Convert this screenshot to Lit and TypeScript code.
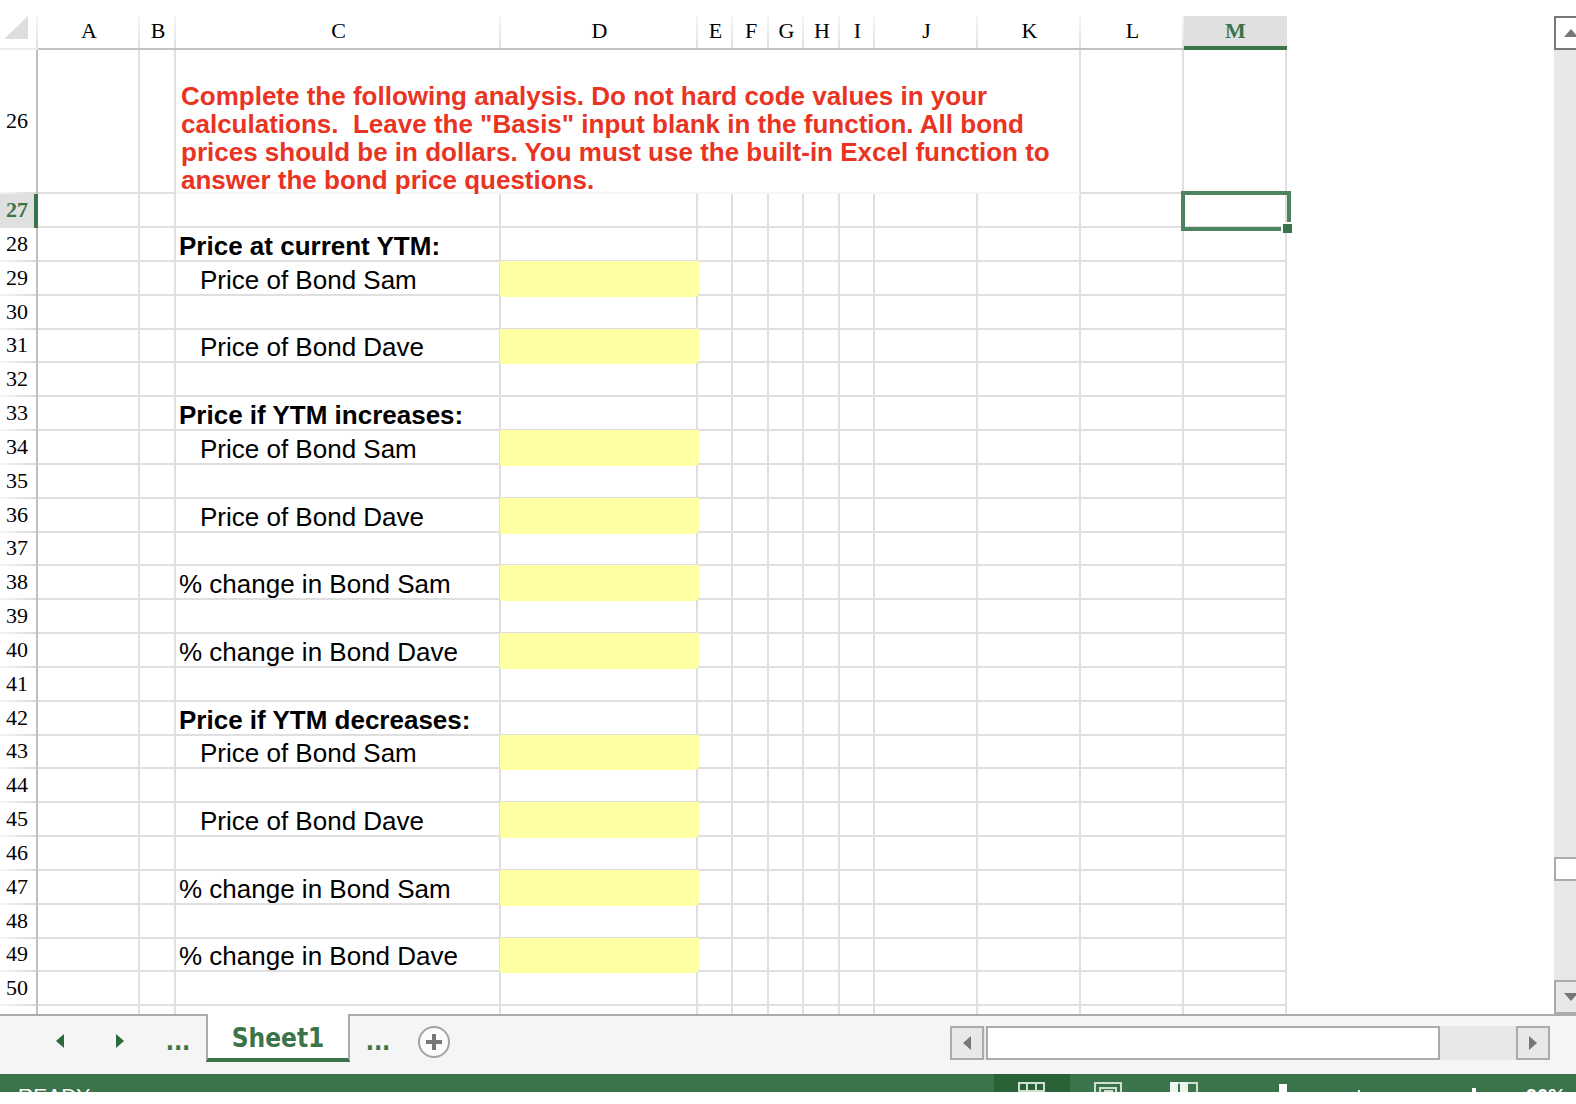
import { LitElement, html, css, nothing } from "lit";
import { customElement } from "lit/decorators.js";
import { classMap } from "lit/directives/class-map.js";

const COLUMNS = ["A", "B", "C", "D", "E", "F", "G", "H", "I", "J", "K", "L", "M"];
const ACTIVE_COLUMN = "M";
const ACTIVE_ROW = 27;

type Label = { text: string; kind: "title" | "item" | "change" };

const LABELS: Record<number, Label> = {
  28: { text: "Price at current YTM:", kind: "title" },
  29: { text: "Price of Bond Sam", kind: "item" },
  31: { text: "Price of Bond Dave", kind: "item" },
  33: { text: "Price if YTM increases:", kind: "title" },
  34: { text: "Price of Bond Sam", kind: "item" },
  36: { text: "Price of Bond Dave", kind: "item" },
  38: { text: "% change in Bond Sam", kind: "change" },
  40: { text: "% change in Bond Dave", kind: "change" },
  42: { text: "Price if YTM decreases:", kind: "title" },
  43: { text: "Price of Bond Sam", kind: "item" },
  45: { text: "Price of Bond Dave", kind: "item" },
  47: { text: "% change in Bond Sam", kind: "change" },
  49: { text: "% change in Bond Dave", kind: "change" },
};

const ROWS = Array.from({ length: 24 }, (_, i) => 27 + i);

@customElement("sheet-grid")
export class SheetGrid extends LitElement {
  static styles = css`
    :host { display: block; overflow: hidden; min-width: 0; }
    table {
      width: 0;
      table-layout: fixed;
      border-collapse: separate;
      border-spacing: 0;
      font-family: "Liberation Sans", Arial, sans-serif;
      font-size: 26px;
      line-height: 28px;
      color: #000;
    }
    .w-head { width: 38px; }
    .w-a { width: 102px; }
    .w-b { width: 36px; }
    .w-c { width: 325px; }
    .w-d { width: 197px; }
    .w-e, .w-g, .w-i { width: 35px; }
    .w-f, .w-h { width: 36px; }
    .w-j, .w-k, .w-l, .w-m { width: 103px; }
    th, td { box-sizing: border-box; padding: 0; }
    th {
      font-family: "Liberation Serif", "Times New Roman", serif;
      font-size: 22px;
      line-height: 24px;
      font-weight: 400;
    }
    thead th {
      height: 34px;
      padding-bottom: 2px;
      border-bottom: 2px solid #c2c2c2;
      background: linear-gradient(#f6f6f6, #dfdfdf) right / 2px 100% no-repeat;
    }
    thead .corner {
      border-bottom-color: #ececec;
      padding: 0 8px 8px 4px;
      vertical-align: top;
    }
    .corner svg { display: block; }
    thead .active {
      background: #e0e0e0;
      border-bottom: 4px solid #3b744b;
      padding-bottom: 0;
      color: #3b744b;
      font-weight: 700;
    }
    tbody th {
      border-right: 2px solid #c0c0c0;
      padding: 0 2px 3px 0;
      background: linear-gradient(90deg, #f6f6f6, #dadada) bottom / 100% 2px no-repeat;
    }
    tbody .active {
      background: #e0e0e0;
      border-right: 4px solid #3b744b;
      padding-right: 0;
      color: #3b744b;
      font-weight: 700;
    }
    td {
      position: relative;
      border-right: 2px solid #dfdfdf;
      border-bottom: 2px solid #dfdfdf;
      white-space: nowrap;
    }
    tr { height: 34px; }
    tbody tr:nth-child(6n) { height: 33px; }
    tbody .tall { height: 144px; }
    .note {
      padding: 28px 0 0 5px;
      border-bottom-color: #f5f5f5;
      vertical-align: bottom;
      font-weight: 700;
      color: #e93323;
    }
    .note p { margin: 0 0 -2px; white-space: pre-wrap; }
    .title, .change { padding-left: 3px; vertical-align: bottom; }
    .title { font-weight: 700; }
    .item { padding-left: 24px; vertical-align: bottom; }
    .entry {
      background: #ffffa3;
      border-color: #ffffa3;
      box-shadow: 0 0 0 1px #ffffa3;
    }
    .entry input {
      display: block;
      box-sizing: border-box;
      width: 100%;
      height: 28px;
      margin: 0;
      padding: 0 4px;
      border: 0;
      outline: 0;
      background: transparent;
      font: inherit;
      text-align: right;
    }
    .cursor {
      position: absolute;
      z-index: 1;
      inset: -3px -6px -5px -3px;
      border: 4px solid #4d8460;
    }
    .handle {
      position: absolute;
      right: -5px;
      bottom: -6px;
      width: 9px;
      height: 9px;
      border: 2px solid #fff;
      border-right: 0;
      border-bottom: 0;
      background: #3b744b;
    }
  `;

  private cell(row: number, col: string) {
    const label = LABELS[row];
    if (col === "C" && label) return html`<td class=${label.kind}>${label.text}</td>`;
    if (col === "D" && label && label.kind !== "title") {
      return html`<td class="entry"><input type="text" aria-label="${label.text}, D${row}"></td>`;
    }
    const active = row === ACTIVE_ROW && col === ACTIVE_COLUMN;
    return html`<td>${active ? html`<div class="cursor"><span class="handle"></span></div>` : nothing}</td>`;
  }

  render() {
    return html`
      <table>
        <colgroup>
          <col class="w-head">
          ${COLUMNS.map((c) => html`<col class="w-${c.toLowerCase()}">`)}
        </colgroup>
        <thead>
          <tr>
            <th class="corner">
              <svg width="24" height="24" viewBox="0 0 24 24" aria-hidden="true">
                <path d="M24 0V23H0Z" fill="#dedede" />
              </svg>
            </th>
            ${COLUMNS.map((c) => html`<th scope="col" class=${classMap({ active: c === ACTIVE_COLUMN })}>${c}</th>`)}
          </tr>
        </thead>
        <tbody>
          <tr class="tall">
            <th scope="row">26</th>
            <td></td>
            <td></td>
            <td class="note" colspan="9"><p>Complete the following analysis. Do not hard code values in your calculations.  Leave the "Basis" input blank in the function. All bond prices should be in dollars. You must use the built-in Excel function to answer the bond price questions.</p></td>
            <td></td>
            <td></td>
          </tr>
          ${ROWS.map((r) => html`
            <tr>
              <th scope="row" class=${classMap({ active: r === ACTIVE_ROW })}>${r}</th>
              ${COLUMNS.map((c) => this.cell(r, c))}
            </tr>`)}
          <tr>
            <th></th>
            ${COLUMNS.map(() => html`<td></td>`)}
          </tr>
        </tbody>
      </table>
    `;
  }
}

@customElement("sheet-tabs")
export class SheetTabs extends LitElement {
  static styles = css`
    :host {
      display: flex;
      box-sizing: border-box;
      height: 60px;
      background: #f5f5f5;
      font-family: "DejaVu Sans Condensed", "DejaVu Sans", Tahoma, sans-serif;
      color: #3b744b;
    }
    button {
      display: flex;
      align-items: center;
      justify-content: center;
      box-sizing: border-box;
      margin: 0;
      padding: 0;
      border: 0;
      background: none;
      color: inherit;
      font: inherit;
    }
    .rule { box-sizing: border-box; height: 60px; border-top: 2px solid #ababab; }
    .nav { display: flex; width: 206px; padding-left: 30px; }
    .nav button { width: 60px; height: 50px; }
    .nav .more, .after .more {
      width: 56px;
      height: 40px;
      align-items: flex-end;
      font-size: 24px;
      line-height: 28px;
      font-weight: 700;
    }
    .tab {
      width: 144px;
      height: 48px;
      padding-top: 4px;
      border: 2px solid #ababab;
      border-top: 0;
      border-bottom: 4px solid #3b744b;
      background: #fff;
      font-size: 26px;
      font-weight: 700;
    }
    .after { display: flex; flex: 1; min-width: 0; }
    .add { width: 56px; height: 52px; }
    .bar {
      display: flex;
      width: 600px;
      height: 34px;
      margin: 10px 26px 0 auto;
      background: #e8e8e8;
    }
    .bar button { width: 34px; height: 34px; border: 2px solid #ababab; background: #e8e8e8; }
    .thumb {
      box-sizing: border-box;
      width: 454px;
      margin: 0 76px 0 2px;
      border: 2px solid #ababab;
      background: #fff;
    }
  `;

  render() {
    return html`
      <div class="rule nav">
        <button aria-label="Previous sheet">
          <svg width="8" height="14" viewBox="0 0 8 14"><path d="M8 0V14L0 7Z" fill="#2c6a3d" /></svg>
        </button>
        <button aria-label="Next sheet">
          <svg width="8" height="14" viewBox="0 0 8 14"><path d="M0 0V14L8 7Z" fill="#2c6a3d" /></svg>
        </button>
        <button class="more">...</button>
      </div>
      <button class="tab" aria-current="page">Sheet1</button>
      <div class="rule after">
        <button class="more">...</button>
        <button class="add" aria-label="New sheet">
          <svg width="34" height="34" viewBox="0 0 34 34" fill="none">
            <circle cx="17" cy="17" r="15" fill="#fbfbfb" stroke="#a3a3a3" stroke-width="2" />
            <path d="M17 9V25M9 17H25" stroke="#777" stroke-width="4" />
          </svg>
        </button>
        <div class="bar">
          <button aria-label="Scroll left">
            <svg width="8" height="14" viewBox="0 0 8 14"><path d="M8 0V14L0 7Z" fill="#777" /></svg>
          </button>
          <div class="thumb"></div>
          <button aria-label="Scroll right">
            <svg width="8" height="14" viewBox="0 0 8 14"><path d="M0 0V14L8 7Z" fill="#777" /></svg>
          </button>
        </div>
      </div>
    `;
  }
}

@customElement("status-bar")
export class StatusBar extends LitElement {
  static styles = css`
    :host {
      display: flex;
      height: 18px;
      overflow: hidden;
      background: #3b744b;
      color: #fff;
      font-family: "Liberation Sans", Arial, sans-serif;
      font-size: 21px;
      line-height: 24px;
    }
    .ready { padding: 10px 0 0 18px; }
    .views { display: flex; margin-left: auto; }
    button {
      display: flex;
      align-items: flex-start;
      justify-content: center;
      box-sizing: border-box;
      width: 76px;
      height: 40px;
      margin: 0;
      padding: 8px 0 0;
      border: 0;
      background: none;
    }
    .on { background: #2a6237; }
    .zoom { display: block; width: 304px; height: 40px; }
    .percent { width: 50px; padding-top: 10px; font-size: 20px; font-weight: 700; }
  `;

  render() {
    return html`
      <span class="ready">READY</span>
      <div class="views">
        <button class="on" aria-label="Normal view">
          <svg width="28" height="24" viewBox="0 0 28 24" fill="none" stroke="#cfe0d3" stroke-width="2">
            <path d="M1 1H26V23H1ZM9 1V23M18 1V23M1 9H26M1 16H26" />
          </svg>
        </button>
        <button aria-label="Page layout view">
          <svg width="28" height="24" viewBox="0 0 28 24" fill="none" stroke="#cfe0d3" stroke-width="2">
            <path d="M1 1H27V23H1ZM6 23V6H22V23M11 23V9H18V23" />
          </svg>
        </button>
        <button aria-label="Page break view">
          <svg width="28" height="24" viewBox="0 0 28 24" fill="none" stroke="#cfe0d3" stroke-width="2">
            <path d="M1 1H27V23H1Z" />
            <path d="M0 0H8V24H0ZM10 0H18V24H10Z" fill="#eef4ef" stroke="none" />
          </svg>
        </button>
      </div>
      <svg class="zoom" width="304" height="40" viewBox="0 0 304 40" fill="#fff" aria-hidden="true">
        <path d="M57 10H65V34H57ZM136 16H138V28H136ZM250 14H254V34H250Z" />
      </svg>
      <span class="percent">90%</span>
    `;
  }
}

@customElement("app-root")
export class AppRoot extends LitElement {
  static styles = css`
    :host {
      display: flex;
      flex-direction: column;
      box-sizing: border-box;
      height: 100vh;
      padding: 16px 0 12px;
      overflow: hidden;
      background: #fff;
    }
    .main { display: flex; flex: 1; min-height: 0; }
    sheet-grid { flex: 1; }
    .scroll {
      display: flex;
      flex-direction: column;
      width: 22px;
      overflow: hidden;
      background: #e8e8e8;
    }
    .scroll button {
      box-sizing: border-box;
      flex: none;
      width: 34px;
      height: 34px;
      margin: 0;
      padding: 0 0 0 8px;
      border: 2px solid #ababab;
      background: #e8e8e8;
      text-align: left;
    }
    .scroll .up { border-color: #777; background: #fff; }
    .scroll svg { display: block; }
    .before { flex: 807; }
    .behind { flex: 99; }
    .thumb {
      box-sizing: border-box;
      width: 34px;
      height: 24px;
      border: 2px solid #ababab;
      background: #fff;
    }
  `;

  render() {
    return html`
      <div class="main">
        <sheet-grid></sheet-grid>
        <div class="scroll">
          <button class="up" aria-label="Scroll up">
            <svg width="14" height="8" viewBox="0 0 14 8"><path d="M0 8H14L7 0Z" fill="#777" /></svg>
          </button>
          <div class="before"></div>
          <div class="thumb"></div>
          <div class="behind"></div>
          <button aria-label="Scroll down">
            <svg width="14" height="8" viewBox="0 0 14 8"><path d="M0 0H14L7 8Z" fill="#777" /></svg>
          </button>
        </div>
      </div>
      <sheet-tabs></sheet-tabs>
      <status-bar></status-bar>
    `;
  }
}
